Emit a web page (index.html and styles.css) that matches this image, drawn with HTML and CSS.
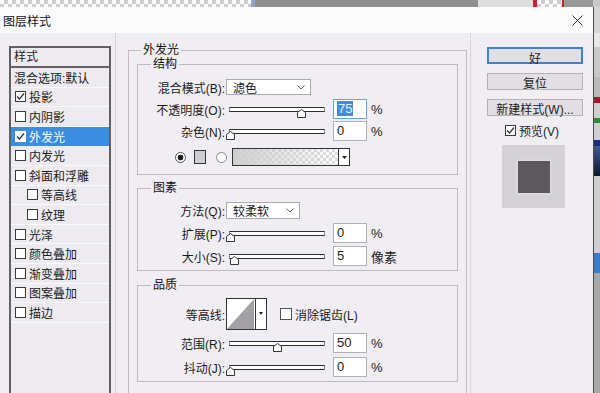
FILE: index.html
```html
<!DOCTYPE html>
<html lang="zh-CN">
<head>
  <meta charset="UTF-8">
  <meta name="viewport" content="width=device-width, initial-scale=1.0">
  <title>图层样式</title>
  <link rel="stylesheet" href="styles.css">
</head>
<body>

  <!-- Strip of the Photoshop window behind the dialog -->
  <div class="desk-top">
    <div class="seg seg-checker seg-wide"></div>
    <div class="seg seg-blue"></div>
    <div class="seg seg-gray"></div>
    <div class="seg seg-light"></div>
    <div class="seg seg-red"></div>
    <div class="seg seg-checker seg-small"></div>
    <div class="seg seg-red seg-thin"></div>
    <div class="seg seg-gray seg-end"></div>
    <div class="seg seg-light seg-rest"></div>
  </div>

  <div class="screen">
    <div class="dialog">

      <!-- Title bar -->
      <div class="titlebar">
        <span class="title">图层样式</span>
        <svg class="close" width="11" height="11" viewBox="0 0 11 11">
          <path d="M0.5 0.5 L10.5 10.5 M10.5 0.5 L0.5 10.5" stroke="#333" stroke-width="1" fill="none"/>
        </svg>
      </div>

      <div class="dialog-body">

        <!-- Style list -->
        <aside class="sidebar">
          <ul class="style-list">
            <li class="list-head">样式</li>
            <li class="list-item plain">混合选项:默认</li>
            <li class="list-item"><span class="check on"><svg width="9" height="9" viewBox="0 0 9 9"><path d="M1 4.5 L3.5 7 L8 1.5" stroke="#333" stroke-width="1.3" fill="none"/></svg></span>投影</li>
            <li class="list-item"><span class="check"></span>内阴影</li>
            <li class="list-item selected"><span class="check on"><svg width="9" height="9" viewBox="0 0 9 9"><path d="M1 4.5 L3.5 7 L8 1.5" stroke="#333" stroke-width="1.3" fill="none"/></svg></span>外发光</li>
            <li class="list-item"><span class="check"></span>内发光</li>
            <li class="list-item"><span class="check"></span>斜面和浮雕</li>
            <li class="list-item sub"><span class="check"></span>等高线</li>
            <li class="list-item sub"><span class="check"></span>纹理</li>
            <li class="list-item"><span class="check"></span>光泽</li>
            <li class="list-item"><span class="check"></span>颜色叠加</li>
            <li class="list-item"><span class="check"></span>渐变叠加</li>
            <li class="list-item"><span class="check"></span>图案叠加</li>
            <li class="list-item"><span class="check"></span>描边</li>
            <li class="list-item empty"></li>
          </ul>
        </aside>

        <!-- Outer glow settings -->
        <main class="main">
          <fieldset class="group outer">
            <legend>外发光</legend>

            <fieldset class="group structure">
              <legend>结构</legend>
              <div class="row row-select">
                <span class="label">混合模式(B):</span>
                <div class="select">滤色<svg width="8" height="5" viewBox="0 0 8 5"><path d="M0.5 0.5 L4 4 L7.5 0.5" stroke="#666" fill="none"/></svg></div>
              </div>
              <div class="row row-first">
                <span class="label">不透明度(O):</span>
                <div class="slider"><span class="thumb" style="left:75%"><svg width="9" height="9" viewBox="0 0 9 9"><path d="M0.5 3.5 L4.5 0.5 L8.5 3.5 L8.5 8.5 L0.5 8.5 Z" fill="#fff" stroke="#333"/></svg></span></div>
                <div class="num focus"><span class="sel">75</span></div>
                <span class="unit">%</span>
              </div>
              <div class="row row-tight">
                <span class="label">杂色(N):</span>
                <div class="slider"><span class="thumb" style="left:0%"><svg width="9" height="9" viewBox="0 0 9 9"><path d="M0.5 3.5 L4.5 0.5 L8.5 3.5 L8.5 8.5 L0.5 8.5 Z" fill="#fff" stroke="#333"/></svg></span></div>
                <div class="num">0</div>
                <span class="unit">%</span>
              </div>
              <div class="row row-color">
                <span class="radio on"></span>
                <span class="swatch"></span>
                <span class="radio second"></span>
                <div class="gradient">
                  <span class="gradient-fill"></span>
                  <span class="drop"><svg width="5" height="3" viewBox="0 0 5 3"><path d="M0 0 H5 L2.5 3 Z" fill="#222"/></svg></span>
                </div>
              </div>
            </fieldset>

            <fieldset class="group elements">
              <legend>图素</legend>
              <div class="row row-select">
                <span class="label">方法(Q):</span>
                <div class="select short">较柔软<svg width="8" height="5" viewBox="0 0 8 5"><path d="M0.5 0.5 L4 4 L7.5 0.5" stroke="#666" fill="none"/></svg></div>
              </div>
              <div class="row row-first">
                <span class="label">扩展(P):</span>
                <div class="slider"><span class="thumb" style="left:0%"><svg width="9" height="9" viewBox="0 0 9 9"><path d="M0.5 3.5 L4.5 0.5 L8.5 3.5 L8.5 8.5 L0.5 8.5 Z" fill="#fff" stroke="#333"/></svg></span></div>
                <div class="num">0</div>
                <span class="unit">%</span>
              </div>
              <div class="row">
                <span class="label">大小(S):</span>
                <div class="slider"><span class="thumb" style="left:4%"><svg width="9" height="9" viewBox="0 0 9 9"><path d="M0.5 3.5 L4.5 0.5 L8.5 3.5 L8.5 8.5 L0.5 8.5 Z" fill="#fff" stroke="#333"/></svg></span></div>
                <div class="num">5</div>
                <span class="unit">像素</span>
              </div>
            </fieldset>

            <fieldset class="group quality">
              <legend>品质</legend>
              <div class="row row-contour">
                <span class="label">等高线:</span>
                <svg class="contour" width="41" height="32" viewBox="0 0 41 32">
                  <rect x="0.5" y="0.5" width="40" height="31" fill="#fff" stroke="#333"/>
                  <path d="M1 31 L28 1 L28 31 Z" fill="#a3a1a5"/>
                  <path d="M29.5 1 V31" stroke="#333"/>
                  <path d="M33 14 H37 L35 17 Z" fill="#222"/>
                </svg>
                <span class="check aa"></span>
                <span class="check-text">消除锯齿(L)</span>
              </div>
              <div class="row">
                <span class="label">范围(R):</span>
                <div class="slider"><span class="thumb" style="left:50%"><svg width="9" height="9" viewBox="0 0 9 9"><path d="M0.5 3.5 L4.5 0.5 L8.5 3.5 L8.5 8.5 L0.5 8.5 Z" fill="#fff" stroke="#333"/></svg></span></div>
                <div class="num">50</div>
                <span class="unit">%</span>
              </div>
              <div class="row row-last">
                <span class="label">抖动(J):</span>
                <div class="slider"><span class="thumb" style="left:0%"><svg width="9" height="9" viewBox="0 0 9 9"><path d="M0.5 3.5 L4.5 0.5 L8.5 3.5 L8.5 8.5 L0.5 8.5 Z" fill="#fff" stroke="#333"/></svg></span></div>
                <div class="num">0</div>
                <span class="unit">%</span>
              </div>
            </fieldset>
          </fieldset>
        </main>

        <!-- Buttons and preview -->
        <div class="actions">
          <button class="btn btn-default">好</button>
          <button class="btn">复位</button>
          <button class="btn">新建样式(W)...</button>
          <label class="preview-toggle">
            <span class="check on"><svg width="9" height="9" viewBox="0 0 9 9"><path d="M1 4.5 L3.5 7 L8 1.5" stroke="#333" stroke-width="1.3" fill="none"/></svg></span>预览(V)
          </label>
          <div class="preview"><span class="preview-swatch"></span></div>
        </div>

      </div>
    </div>

    <!-- Edge of the panels behind -->
    <div class="ps-panel">
      <span class="p p1"></span>
      <span class="p p2"></span>
      <span class="p p3"></span>
      <span class="p p4"></span>
      <span class="p p5"></span>
      <span class="p p6"></span>
      <span class="p p7"></span>
      <span class="p p8"></span>
      <span class="p p9"></span>
      <span class="p p10"></span>
      <span class="p p11"></span>
      <span class="p p12"></span>
    </div>
  </div>

</body>
</html>
```

FILE: styles.css
```css
/* Global styles */
* {
  box-sizing: border-box;
}

body {
  margin: 0;
  width: 600px;
  height: 393px;
  overflow: hidden;
  font-family: "Liberation Sans", "Noto Sans CJK SC", sans-serif;
  font-size: 12px;
  color: #1b1b1b;
  background-color: #f1eef3;
}

/* Window behind the dialog */
.desk-top {
  display: flex;
  height: 7px;
}

.seg {
  height: 100%;
}

.seg-checker {
  background-color: #fff;
  background-image:
    linear-gradient(45deg, #cdcdcd 25%, transparent 25%, transparent 75%, #cdcdcd 75%),
    linear-gradient(45deg, #cdcdcd 25%, transparent 25%, transparent 75%, #cdcdcd 75%);
  background-size: 8px 8px;
  background-position: 0 0, 4px 4px;
}

.seg-wide { width: 251px; }
.seg-small { width: 25px; }
.seg-blue { width: 4px; background-color: #8fa6c8; }
.seg-gray { width: 223px; background-color: #8e8e8e; }
.seg-light { width: 55px; background-color: #dddddd; }
.seg-red { width: 4px; background-color: #c0262c; }
.seg-thin { width: 2px; }
.seg-end { width: 29px; background-color: #9a9a9a; }
.seg-rest { flex: 1; background-color: #c9c9c9; }

.screen {
  display: flex;
  height: 386px;
}

/* Dialog */
.dialog {
  width: 594px;
  display: flex;
  flex-direction: column;
  border-right: 1px solid #4a4a4a;
  background-color: #f1eef3;
}

.titlebar {
  height: 26px;
  flex-shrink: 0;
  display: flex;
  align-items: center;
  justify-content: space-between;
  padding: 0 10px 0 3px;
  background-color: #fcfcfd;
}

.title {
  font-size: 12px;
  color: #111;
}

.dialog-body {
  flex: 1;
  display: flex;
  overflow: hidden;
}

/* Style list */
.sidebar {
  padding: 13px 4px 0 9px;
  border-right: 1px solid #d4d2d7;
}

.style-list {
  list-style: none;
  margin: 0;
  padding: 0;
  width: 102px;
  height: 400px;
  border: 2px solid #636165;
  border-bottom: none;
  background-color: #eeebf0;
}

.list-head {
  height: 20px;
  padding-left: 3px;
  line-height: 18px;
  border-bottom: 2px solid #636165;
}

.list-item {
  height: 19.6px;
  display: flex;
  align-items: center;
  padding-left: 4px;
  border-bottom: 1px solid #faf9fb;
}

.list-item.plain {
  padding-left: 3px;
}

.list-item.sub {
  padding-left: 16px;
}

.list-item.selected {
  background-color: #3b8de0;
  color: #fff;
  border-bottom-color: #3b8de0;
}

.list-item.empty {
  border-bottom: none;
}

.check {
  width: 11px;
  height: 11px;
  flex-shrink: 0;
  display: inline-flex;
  align-items: center;
  justify-content: center;
  margin-right: 3px;
  border: 1px solid #3a3a3a;
  background-color: #fff;
}

.selected .check {
  border-color: #fff;
}

/* Settings */
.main {
  padding: 10px 3px 0 12px;
  border-right: 1px solid #d6d4d9;
}

.group {
  margin: 0;
  padding: 0;
  border: 1px solid #bdbbc0;
  min-width: 0;
}

.group legend {
  padding: 0 2px;
  margin-left: 13px;
  line-height: 14px;
  color: #111;
}

.outer {
  width: 339px;
  height: 400px;
  padding: 0 8px;
}

.outer > legend {
  margin-left: 4px;
}

.structure {
  padding-bottom: 8px;
}

.elements {
  margin-top: 6px;
  padding-bottom: 4px;
}

.quality {
  margin-top: 7px;
  padding-bottom: 4px;
}

.row {
  display: flex;
  align-items: center;
  height: 20px;
  margin-top: 3px;
}

.row-select {
  height: 16px;
  margin-top: 8px;
}

.elements .row-select {
  height: 17px;
  margin-top: 7px;
}

.row-first {
  margin-top: 4px;
}

.row-tight {
  margin-top: 2px;
}

.row-last {
  margin-top: 4px;
}

.row-color {
  height: 18px;
  margin-top: 7px;
}

.row-contour {
  height: 32px;
  margin-top: 6px;
}

.label {
  width: 87px;
  flex-shrink: 0;
  text-align: right;
}

.select {
  width: 85px;
  height: 100%;
  margin-left: 1px;
  display: flex;
  align-items: center;
  justify-content: space-between;
  padding: 0 5px 0 6px;
  border: 1px solid #acacac;
  background-color: #fff;
}

.select.short {
  width: 74px;
}

/* Slider */
.slider {
  position: relative;
  width: 96px;
  height: 5px;
  margin-left: 4px;
  border-top: 1px solid #2e2e2e;
  border-bottom: 1px solid #2e2e2e;
  border-left: 1px solid #8a8a8a;
  border-right: 1px solid #8a8a8a;
  background-color: #fff;
}

.thumb {
  position: absolute;
  top: 1px;
  width: 9px;
  height: 9px;
  margin-left: -4px;
  display: block;
}

.thumb svg {
  display: block;
}

.num {
  width: 34px;
  height: 20px;
  margin-left: 8px;
  padding-left: 3px;
  line-height: 18px;
  border: 1px solid #b1b0b4;
  background-color: #fff;
  font-size: 13px;
}

.num.focus {
  border-color: #6aa5e0;
}

.sel {
  background-color: #3d8ee0;
  color: #e8f2fc;
  padding: 0 1px;
}

.unit {
  margin-left: 4px;
  font-size: 13px;
}

/* Colour row */
.radio {
  width: 11px;
  height: 11px;
  flex-shrink: 0;
  border-radius: 50%;
  border: 1px solid #555;
  background-color: #fff;
  margin-left: 37px;
}

.radio.on {
  background: radial-gradient(circle, #1e1e1e 0 2.6px, #fff 3.2px);
}

.radio.second {
  margin-left: 10px;
  border-color: #888;
}

.swatch {
  width: 12px;
  height: 14px;
  margin-left: 8px;
  border: 1px solid #333;
  background-color: #cfcdd1;
}

.gradient {
  width: 118px;
  height: 18px;
  margin-left: 5px;
  display: flex;
  border: 1px solid #333;
  background-color: #fff;
}

.gradient-fill {
  flex: 1;
  background-color: #fff;
  background-image:
    linear-gradient(90deg, rgba(205, 205, 205, 0.95), rgba(205, 205, 205, 0)),
    linear-gradient(45deg, #dcdcdc 25%, transparent 25%, transparent 75%, #dcdcdc 75%),
    linear-gradient(45deg, #dcdcdc 25%, transparent 25%, transparent 75%, #dcdcdc 75%);
  background-size: 100% 100%, 6px 6px, 6px 6px;
  background-position: 0 0, 0 0, 3px 3px;
}

.drop {
  width: 11px;
  display: flex;
  align-items: center;
  justify-content: center;
  border-left: 1px solid #333;
}

.contour {
  margin-left: 1px;
  flex-shrink: 0;
}

.check.aa {
  margin-left: 13px;
  width: 12px;
  height: 12px;
  border-color: #555;
}

/* Buttons */
.actions {
  width: 96px;
  margin-left: 16px;
  padding-top: 14px;
  display: flex;
  flex-direction: column;
}

.btn {
  height: 17px;
  margin: 0 0 9px 0;
  padding: 0;
  font: inherit;
  color: #1b1b1b;
  border: 1px solid #b4b2b7;
  background-color: #e1dfe4;
}

.btn-default {
  border: 2px solid #3b82cf;
}

.preview-toggle {
  display: flex;
  align-items: center;
  height: 12px;
  margin: -1px 0 0 18px;
}

.preview {
  width: 63px;
  height: 63px;
  margin: 9px 0 0 15px;
  display: flex;
  align-items: center;
  justify-content: center;
  background-color: #d4d2d6;
}

.preview-swatch {
  width: 32px;
  height: 32px;
  background-color: #5c585e;
  box-shadow: 0 0 2px 1px #e2e0e4;
}

/* Panels behind the dialog */
.ps-panel {
  flex: 1;
  display: flex;
  flex-direction: column;
  background-color: #a9a9a9;
}

.p { display: block; }
.p1 { height: 26px; background-color: #d6d6d6; }
.p2 { height: 14px; background-color: #e8e8e8; }
.p3 { height: 30px; background-color: #c8c8c8; }
.p4 { height: 20px; background-color: #b9b9b9; }
.p5 { height: 6px; background-color: #9b1c2a; }
.p6 { height: 15px; background-color: #d0d0d0; }
.p7 { height: 5px; background-color: #2e8b3a; }
.p8 { height: 17px; background-color: #d0d0d0; }
.p9 { height: 6px; background-color: #1b2a7a; }
.p10 { height: 30px; background: linear-gradient(#3e5c8c, #101828); }
.p11 { height: 77px; background-color: #cfcfcf; }
.p12 { height: 20px; background-color: #3a7ad0; }
```
